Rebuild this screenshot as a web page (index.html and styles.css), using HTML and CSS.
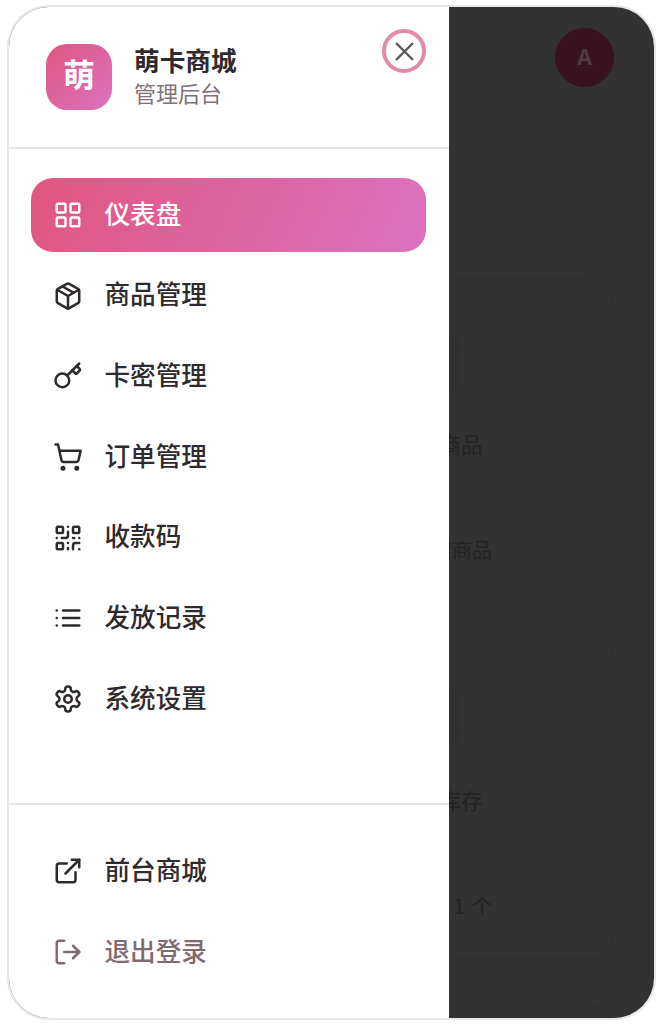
FILE: index.html
```html
<!DOCTYPE html>
<html lang="zh-CN">
<head>
<meta charset="utf-8">
<title>萌卡商城 管理后台</title>
<link rel="stylesheet" href="styles.css">
</head>
<body>
<div class="frame">
  <div class="page">
    <div class="topbar"><div class="avatar">A</div></div>
    <div class="cards">
      <section class="card"><div class="card-icon"></div><div class="card-label">总商品</div><div class="card-sub">上架商品</div></section>
      <section class="card"><div class="card-icon"></div><div class="card-label">总库存</div><div class="card-sub card-count">预警 1 个</div></section>
      <section class="card card-next"></section>
    </div>
  </div>
  <aside class="sheet">
    <header class="sheet-head">
      <div class="logo">萌</div>
      <div class="brand">
        <div class="brand-name">萌卡商城</div>
        <div class="brand-sub">管理后台</div>
      </div>
      <button class="close" type="button" aria-label="关闭">
        <svg class="close-icon" viewBox="0 0 24 24"><path d="M18 6 6 18"/><path d="m6 6 12 12"/></svg>
      </button>
    </header>
    <nav class="nav">
      <a class="item active"><svg class="icon" viewBox="0 0 24 24"><rect x="3" y="3" width="7" height="7" rx="1"/><rect x="14" y="3" width="7" height="7" rx="1"/><rect x="14" y="14" width="7" height="7" rx="1"/><rect x="3" y="14" width="7" height="7" rx="1"/></svg><span class="label">仪表盘</span></a>
      <a class="item"><svg class="icon" viewBox="0 0 24 24"><path d="M11 21.73a2 2 0 0 0 2 0l7-4A2 2 0 0 0 21 16V8a2 2 0 0 0-1-1.73l-7-4a2 2 0 0 0-2 0l-7 4A2 2 0 0 0 3 8v8a2 2 0 0 0 1 1.73z"/><path d="M12 22V12"/><path d="m3.3 7 8.7 5 8.7-5"/><path d="m7.5 4.27 9 5.15"/></svg><span class="label">商品管理</span></a>
      <a class="item"><svg class="icon" viewBox="0 0 24 24"><path d="m15.5 7.5 2.3 2.3a1 1 0 0 0 1.4 0l2.1-2.1a1 1 0 0 0 0-1.4L19 4"/><path d="m21 2-9.6 9.6"/><circle cx="7.5" cy="15.5" r="5.5"/></svg><span class="label">卡密管理</span></a>
      <a class="item"><svg class="icon" viewBox="0 0 24 24"><circle cx="8" cy="21" r="1"/><circle cx="19" cy="21" r="1"/><path d="M2.05 2.05h2l2.66 12.42a2 2 0 0 0 2 1.58h9.78a2 2 0 0 0 1.95-1.57l1.65-7.43H5.12"/></svg><span class="label">订单管理</span></a>
      <a class="item"><svg class="icon" viewBox="0 0 24 24"><rect x="3" y="3" width="5" height="5" rx="1"/><rect x="16" y="3" width="5" height="5" rx="1"/><rect x="3" y="16" width="5" height="5" rx="1"/><path d="M21 16h-3a2 2 0 0 0-2 2v3"/><path d="M21 21v.01"/><path d="M12 7v3a2 2 0 0 1-2 2H7"/><path d="M3 12h.01"/><path d="M12 3h.01"/><path d="M12 16v.01"/><path d="M16 12h1"/><path d="M21 12v.01"/><path d="M12 21v-1"/></svg><span class="label">收款码</span></a>
      <a class="item"><svg class="icon" viewBox="0 0 24 24"><path d="M3 12h.01"/><path d="M3 18h.01"/><path d="M3 6h.01"/><path d="M8 12h13"/><path d="M8 18h13"/><path d="M8 6h13"/></svg><span class="label">发放记录</span></a>
      <a class="item"><svg class="icon" viewBox="0 0 24 24"><path d="M12.22 2h-.44a2 2 0 0 0-2 2v.18a2 2 0 0 1-1 1.73l-.43.25a2 2 0 0 1-2 0l-.15-.08a2 2 0 0 0-2.73.73l-.22.38a2 2 0 0 0 .73 2.73l.15.1a2 2 0 0 1 1 1.72v.51a2 2 0 0 1-1 1.74l-.15.09a2 2 0 0 0-.73 2.73l.22.38a2 2 0 0 0 2.73.73l.15-.08a2 2 0 0 1 2 0l.43.25a2 2 0 0 1 1 1.73V20a2 2 0 0 0 2 2h.44a2 2 0 0 0 2-2v-.18a2 2 0 0 1 1-1.73l.43-.25a2 2 0 0 1 2 0l.15.08a2 2 0 0 0 2.73-.73l.22-.39a2 2 0 0 0-.73-2.73l-.15-.08a2 2 0 0 1-1-1.74v-.5a2 2 0 0 1 1-1.74l.15-.09a2 2 0 0 0 .73-2.73l-.22-.38a2 2 0 0 0-2.73-.73l-.15.08a2 2 0 0 1-2 0l-.43-.25a2 2 0 0 1-1-1.73V4a2 2 0 0 0-2-2z"/><circle cx="12" cy="12" r="3"/></svg><span class="label">系统设置</span></a>
    </nav>
    <footer class="foot">
      <a class="item"><svg class="icon" viewBox="0 0 24 24"><path d="M15 3h6v6"/><path d="M10 14 21 3"/><path d="M18 13v6a2 2 0 0 1-2 2H5a2 2 0 0 1-2-2V8a2 2 0 0 1 2-2h6"/></svg><span class="label">前台商城</span></a>
      <a class="item muted"><svg class="icon" viewBox="0 0 24 24"><path d="M9 21H5a2 2 0 0 1-2-2V5a2 2 0 0 1 2-2h4"/><path d="m16 17 5-5-5-5"/><path d="M21 12H9"/></svg><span class="label">退出登录</span></a>
    </footer>
  </aside>
</div>
</body>
</html>
```
FILE: styles.css
```css
* { box-sizing: border-box; }
html, body { margin: 0; padding: 0; background: #fff; }
body {
  height: 1024px;
  overflow: hidden;
  padding: 5px 0 0 7px;
  font-family: "Noto Sans CJK SC", "Noto Sans", sans-serif;
}
.frame {
  position: relative;
  width: 649px;
  height: 1015px;
  border: 2px solid #e9e7e8;
  border-radius: 42px;
  overflow: hidden;
  background: #323232;
}
.page { height: 100%; background: #323232; color: #222; }
.topbar {
  height: 102px;
  padding: 21px 40px 0 0;
  display: flex;
  justify-content: flex-end;
  align-items: flex-start;
  border-bottom: 1px solid #2f2f2f;
}
.avatar {
  width: 59px;
  height: 59px;
  border-radius: 50%;
  background: #38121f;
  color: #4e3a42;
  font: 700 21px/59px "Inter", "Liberation Sans", sans-serif;
  text-align: center;
}
.cards { padding: 170px 40px 0 0; display: flex; flex-direction: column; align-items: flex-end; gap: 31px; }
.card {
  width: 560px;
  height: 325px;
  flex: none;
  border: 1px solid #2e2e2e;
  border-radius: 26px;
  padding: 54px 0 0 363px;
}
.card-icon { width: 56px; height: 56px; margin-left: -12px; border-radius: 14px; background: #303030; }
.card-label { margin-top: 38px; font-size: 21.5px; line-height: 32px; white-space: nowrap; }
.card-sub { margin-top: 74px; margin-left: -6px; font-size: 20px; line-height: 32px; white-space: nowrap; }
.card-count { margin-left: -12px; word-spacing: 3px; }
.card-next { margin-top: 14px; }

.sheet {
  position: absolute;
  left: 0;
  top: 0;
  bottom: 0;
  width: 440px;
  background: #fff;
  display: flex;
  flex-direction: column;
  color: #2f2a2d;
}
.sheet-head {
  position: relative;
  flex: none;
  height: 142px;
  padding-left: 37px;
  display: flex;
  align-items: center;
  gap: 22px;
  border-bottom: 2px solid #e9e7e8;
}
.logo {
  width: 66px;
  height: 66px;
  border-radius: 21px;
  background: linear-gradient(135deg, #e0567f, #da72c0);
  color: #fff;
  font-size: 32px;
  font-weight: 700;
  line-height: 58px;
  text-align: center;
}
.brand { margin-bottom: 4px; }
.brand-name { font-size: 25.7px; font-weight: 700; line-height: 34px; }
.brand-sub { font-size: 22px; line-height: 31px; color: #7f7177; }
.close {
  position: absolute;
  left: 373px;
  top: 22px;
  width: 44px;
  height: 44px;
  padding: 0;
  border: 4px solid #e38aa6;
  border-radius: 50%;
  background: #fff;
  display: flex;
  align-items: center;
  justify-content: center;
}
.close-icon { width: 31px; height: 31px; fill: none; stroke: #595558; stroke-width: 1.9; stroke-linecap: round; }
.nav {
  flex: 1;
  padding: 29px 23px 0 22px;
  display: flex;
  flex-direction: column;
  gap: 6.7px;
}
.foot {
  flex: none;
  padding: 29px 23px 29px 22px;
  display: flex;
  flex-direction: column;
  gap: 6.7px;
  border-top: 2px solid #e9e7e8;
}
.item {
  flex: none;
  height: 74px;
  padding-left: 22px;
  border-radius: 22px;
  display: flex;
  align-items: center;
  gap: 21.5px;
  font-size: 25.6px;
  font-weight: 500;
}
.label { margin-bottom: 6px; }
.icon {
  width: 30px;
  height: 30px;
  flex: none;
  fill: none;
  stroke: currentColor;
  stroke-width: 2;
  stroke-linecap: round;
  stroke-linejoin: round;
}
.active { color: #fff; background: linear-gradient(115deg, #e0567f, #da72c0); }
.muted { color: #82696f; }
```
